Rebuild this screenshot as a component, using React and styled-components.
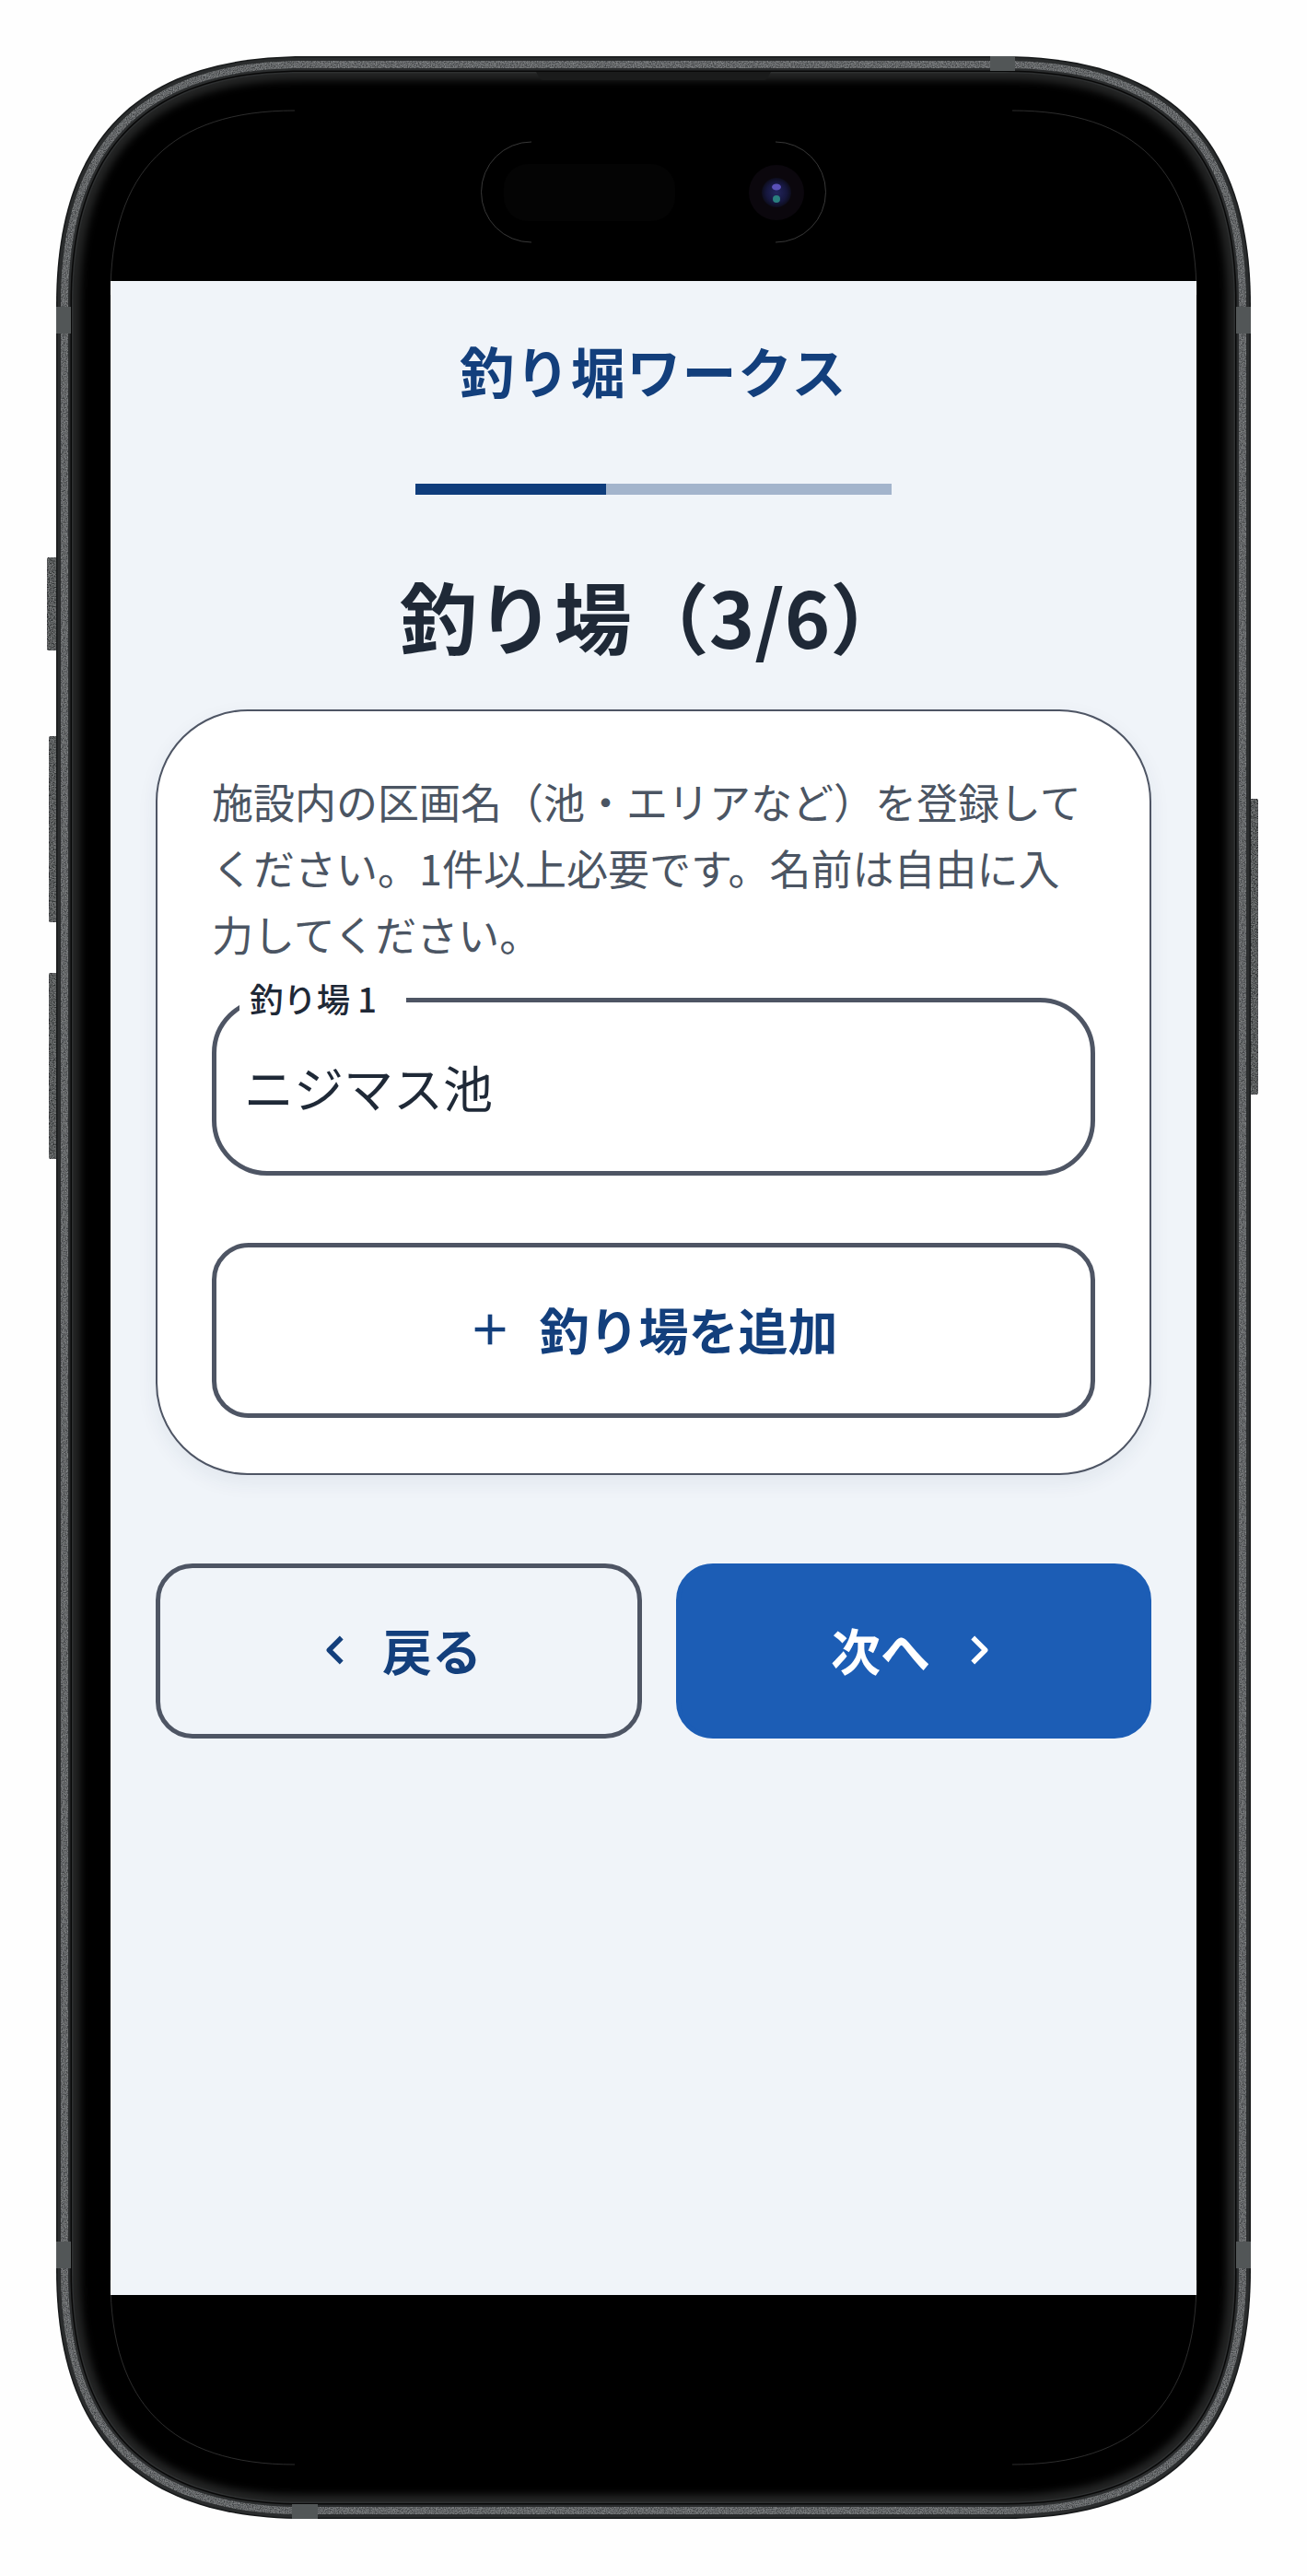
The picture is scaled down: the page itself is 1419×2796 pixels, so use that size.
import React from 'react';
import styled, { createGlobalStyle } from 'styled-components';
import { ChevronLeft, ChevronRight, Plus } from 'lucide-react';

const PHONE_W = 1297;
const PHONE_H = 2673;

const GlobalStyle = createGlobalStyle`
  html, body {
    margin: 0;
    background: #fefefe;
  }
  * {
    box-sizing: border-box;
  }
`;

const Page = styled.div`
  width: 1419px;
  height: 2796px;
  padding: 61px 61px 0;
  font-family: "Noto Sans CJK JP", "Noto Sans", sans-serif;
`;

const Phone = styled.div`
  position: relative;
  width: ${PHONE_W}px;
  height: ${PHONE_H}px;
  padding: 244px 59px 243px;
  display: flex;
  flex-direction: column;
`;

const Decor = styled.svg`
  position: absolute;
  left: 0;
  top: 0;
  overflow: visible;
`;

const Screen = styled.main`
  position: relative;
  flex: 1;
  background: #f0f4f9;
  padding: 55px 49px 0;
  display: flex;
  flex-direction: column;
`;

const Brand = styled.h1`
  margin: 0;
  text-align: center;
  font-size: 59px;
  line-height: 84px;
  font-weight: 700;
  letter-spacing: 1.4px;
  color: #133f7c;
`;

const Progress = styled.div`
  width: 517px;
  height: 12px;
  margin: 81px auto 0;
  background: #a3b4cc;
`;

const ProgressFill = styled.div`
  height: 100%;
  background: #0f3d7c;
`;

const Heading = styled.h2`
  margin: 76px 0 0;
  text-align: center;
  font-size: 84px;
  line-height: 109px;
  font-weight: 700;
  color: #1f2937;
`;

const Card = styled.section`
  margin-top: 48px;
  padding: 62px 59px 60px;
  background: #ffffff;
  border: 2.8px solid #4e5564;
  border-radius: 100px;
  box-shadow: 0 8px 22px rgba(30, 50, 90, 0.07);
`;

const Description = styled.p`
  margin: 0;
  font-size: 45px;
  line-height: 72px;
  color: #4b5563;
`;

const Field = styled.div`
  position: relative;
  margin-top: 33px;
`;

const FieldLabel = styled.label`
  position: absolute;
  left: 30px;
  top: -25px;
  padding: 0 32px 0 11px;
  background: #ffffff;
  font-size: 36.4px;
  line-height: 50px;
  font-weight: 500;
  color: #1f2937;
`;

const TextInput = styled.input`
  display: block;
  width: 100%;
  height: 193px;
  padding: 0 30px;
  background: #ffffff;
  border: 5.6px solid #4e5564;
  border-radius: 60px;
  outline: none;
  font-family: inherit;
  font-size: 54px;
  color: #1f2937;
`;

const Action = styled.button`
  display: flex;
  align-items: center;
  justify-content: center;
  gap: ${(props) => props.$gap || 26}px;
  height: 190px;
  padding: 0 ${(props) => props.$padRight || 0}px 3px ${(props) => props.$padLeft || 0}px;
  border-radius: 40px;
  border: 5.6px solid ${(props) => (props.$primary ? '#1c5db5' : '#4e5564')};
  background: ${(props) => (props.$primary ? '#1c5db5' : 'transparent')};
  color: ${(props) => (props.$primary ? '#ffffff' : '#133f7c')};
  font-family: inherit;
  font-size: 54px;
  font-weight: 700;
`;

const AddButton = styled(Action)`
  width: 100%;
  margin-top: 73px;
  background: #ffffff;
`;

const NavRow = styled.div`
  display: grid;
  grid-template-columns: 528px 1fr;
  gap: 37px;
  margin-top: 96px;
`;

// rounded outline of the phone at a given inset, the same corner on all four sides
const outline = (d) => {
  const s = (229 - d) / 229;
  const L = 270 * s;
  const c = 89 * s;
  const l = d;
  const t = d;
  const r = PHONE_W - d;
  const b = PHONE_H - d;
  return [
    `M${l} ${t + L}C${l} ${t + c} ${l + c} ${t} ${l + L} ${t}`,
    `L${r - L} ${t}C${r - c} ${t} ${r} ${t + c} ${r} ${t + L}`,
    `L${r} ${b - L}C${r} ${b - c} ${r - c} ${b} ${r - L} ${b}`,
    `L${l + L} ${b}C${l + c} ${b} ${l} ${b - c} ${l} ${b - L}Z`,
  ].join('');
};

const rings = [
  [0, '#17191a'],
  [1.5, '#2a2c2d'],
  [5, '#424546', true],
  [13, '#2b2d2e'],
  [15.5, '#080808'],
  [17, '#2e3031'],
  [18.5, '#242525'],
];

const bands = [
  [1014, 0, 27, 16],
  [0, 272, 16, 29],
  [1281, 272, 16, 29],
  [0, 2372, 16, 29],
  [1281, 2372, 16, 29],
  [256, 2657, 28, 16],
];

const sideKeys = [
  [-10, 544, 11, 101],
  [-8, 738, 9, 202],
  [-8, 995, 9, 202],
  [1296, 806, 9, 321],
];

const displayArcs = [
  'M59 259C59 125 125 59 259 59',
  'M1238 259C1238 125 1172 59 1038 59',
  'M59 2414C59 2548 125 2614 259 2614',
  'M1238 2414C1238 2548 1172 2614 1038 2614',
];

const PhoneBody = () => (
  <Decor width={PHONE_W} height={PHONE_H} viewBox={`0 0 ${PHONE_W} ${PHONE_H}`}>
    <defs>
      <filter id="grain" x="0" y="0" width="100%" height="100%">
        <feTurbulence type="fractalNoise" baseFrequency="0.8" numOctaves="2" seed="4" result="n" />
        <feColorMatrix in="n" type="matrix" values="0 0 0 0 0.55  0 0 0 0 0.57  0 0 0 0 0.58  0 0 0 0.7 -0.2" result="speck" />
        <feComposite in="speck" in2="SourceAlpha" operator="in" result="clipped" />
        <feMerge>
          <feMergeNode in="SourceGraphic" />
          <feMergeNode in="clipped" />
        </feMerge>
      </filter>
      <filter id="soft" x="-2%" y="-2%" width="104%" height="104%">
        <feGaussianBlur stdDeviation="4" />
      </filter>
      <radialGradient id="lens">
        <stop offset="0%" stopColor="#23265f" />
        <stop offset="70%" stopColor="#15163c" />
        <stop offset="100%" stopColor="#0d0d1c" />
      </radialGradient>
    </defs>

    {sideKeys.map(([x, y, w, h]) => (
      <rect key={y} x={x} y={y} width={w} height={h} rx="3" fill="#2f3132" stroke="#17181a" strokeWidth="1" filter="url(#grain)" />
    ))}

    {rings.map(([d, fill, grainy]) => (
      <path key={d} d={outline(d)} fill={fill} filter={grainy ? 'url(#grain)' : undefined} />
    ))}
    <path d={outline(26)} fill="#000" filter="url(#soft)" />

    {bands.map(([x, y, w, h]) => (
      <rect key={`${x}-${y}`} x={x} y={y} width={w} height={h} fill="#525657" />
    ))}

    <path d="M521 17H776L772 24Q771 26 768 26H529Q526 26 525 24Z" fill="#1a1b1b" />

    {displayArcs.map((d) => (
      <path key={d} d={d} fill="none" stroke="#383838" strokeWidth="0.8" />
    ))}

    <path d="M516 93A54.5 54.5 0 0 0 516 202M781 93A54.5 54.5 0 0 1 781 202" fill="none" stroke="#464646" strokeWidth="0.8" />
    <rect x="486" y="117" width="186" height="62" rx="26" fill="#040404" />
    <circle cx="782" cy="148" r="30" fill="#0b070d" />
    <circle cx="782" cy="148" r="16" fill="url(#lens)" />
    <ellipse cx="782" cy="142" rx="5" ry="3.5" fill="#5a50b8" />
    <ellipse cx="782" cy="155" rx="4" ry="4" fill="#2a7f7f" />
  </Decor>
);

export default function App() {
  return (
    <Page>
      <GlobalStyle />
      <Phone>
        <PhoneBody />
        <Screen>
          <Brand>釣り堀ワークス</Brand>
          <Progress>
            <ProgressFill style={{ width: `${(3 / 6) * 80}%` }} />
          </Progress>
          <Heading>釣り場（3/6）</Heading>
          <Card>
            <Description>
              施設内の区画名（池・エリアなど）を登録してください。1件以上必要です。名前は自由に入力してください。
            </Description>
            <Field>
              <FieldLabel htmlFor="pond-1">釣り場 1</FieldLabel>
              <TextInput id="pond-1" defaultValue="ニジマス池" />
            </Field>
            <AddButton $padRight={6}>
              <Plus size={56} strokeWidth={2} strokeLinecap="butt" />
              釣り場を追加
            </AddButton>
          </Card>
          <NavRow>
            <Action $padRight={6} $gap={24}>
              <ChevronLeft size={54} strokeWidth={2.4} strokeLinecap="butt" />
              戻る
            </Action>
            <Action $primary $padLeft={8}>
              次へ
              <ChevronRight size={54} strokeWidth={2.4} strokeLinecap="butt" />
            </Action>
          </NavRow>
        </Screen>
      </Phone>
    </Page>
  );
}
